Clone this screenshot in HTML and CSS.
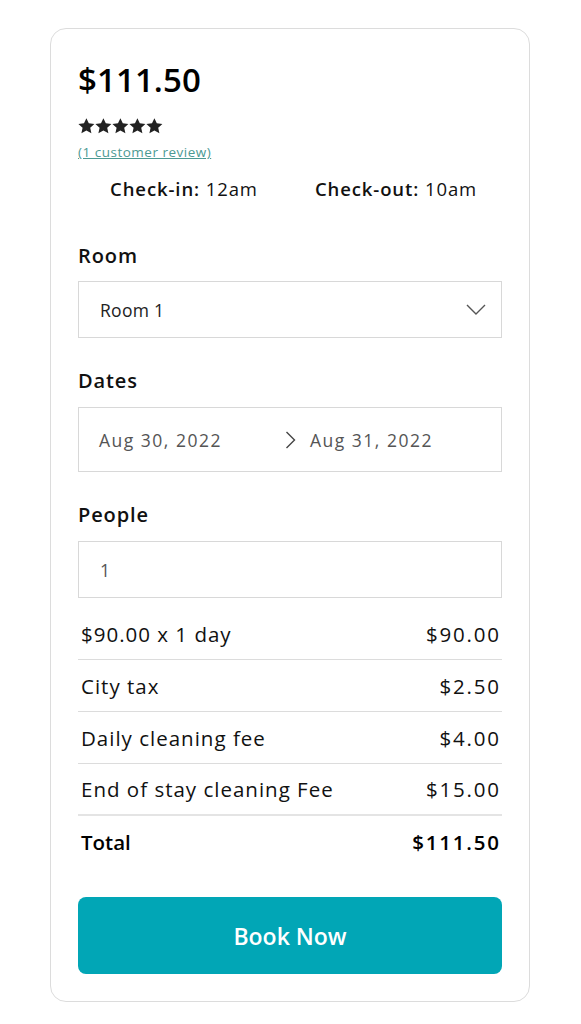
FILE: index.html
```html
<!DOCTYPE html>
<html>
<head>
<meta charset="utf-8">
<link rel="stylesheet" href="styles.css">
</head>
<body>
<div class="card">
  <div class="price">$111.50</div>
  <div class="stars">
    <svg viewBox="0 0 85 16" width="85" height="16">
      <g fill="#222">
        <path id="s" d="M8.4 0.2l2.4 5.1 5.6 0.6-4.2 3.8 1.2 5.6-5-2.9-5 2.9 1.2-5.6-4.2-3.8 5.6-0.6z"/>
        <use href="#s" x="17"/>
        <use href="#s" x="34"/>
        <use href="#s" x="51"/>
        <use href="#s" x="68"/>
      </g>
    </svg>
  </div>
  <a class="review" href="#">(1 customer review)</a>
  <div class="times">
    <div class="time"><b>Check-in:</b> 12am</div>
    <div class="time"><b>Check-out:</b> 10am</div>
  </div>

  <div class="label label-first">Room</div>
  <div class="field select">
    <span>Room 1</span>
    <svg class="chev-down" viewBox="0 0 20 11" width="20" height="11"><path d="M1 1l9 9 9-9" fill="none" stroke="#555" stroke-width="1.4"/></svg>
  </div>

  <div class="label">Dates</div>
  <div class="field dates">
    <span class="date">Aug 30, 2022</span>
    <svg class="chev-right" viewBox="0 0 11 18" width="11" height="18"><path d="M1.5 1l8 8-8 8" fill="none" stroke="#444" stroke-width="1.4"/></svg>
    <span class="date">Aug 31, 2022</span>
  </div>

  <div class="label">People</div>
  <div class="field people"><span>1</span></div>

  <div class="lines">
    <div class="line"><span>$90.00 x 1 day</span><span class="amt">$90.00</span></div>
    <div class="line"><span>City tax</span><span class="amt">$2.50</span></div>
    <div class="line"><span>Daily cleaning fee</span><span class="amt">$4.00</span></div>
    <div class="line line-last"><span>End of stay cleaning Fee</span><span class="amt">$15.00</span></div>
    <div class="line total"><span class="total-label">Total</span><span class="amt">$111.50</span></div>
  </div>

  <button class="book">Book Now</button>
</div>
</body>
</html>
```
FILE: styles.css
```css
* { box-sizing: border-box; }
html, body { margin: 0; padding: 0; background: #fff; }
body {
  font-family: "Open Sans", "Lato", sans-serif;
  color: #111;
}
.card {
  width: 480px;
  margin: 28px 0 0 50px;
  border: 1px solid #dcdcdc;
  border-radius: 16px;
  padding: 31px 27px 27px 27px;
  display: flex;
  flex-direction: column;
}
.price {
  font-size: 33px;
  line-height: 40px;
  font-weight: 600;
  color: #000;
  letter-spacing: 0.1px;
}
.stars {
  margin-top: 18px;
  height: 16px;
  line-height: 0;
}
.review {
  margin-top: 9px;
  font-size: 13.5px;
  line-height: 18px;
  color: #4c9a93;
  text-decoration: underline;
  letter-spacing: 0.5px;
  align-self: flex-start;
}
.times {
  margin-top: 16px;
  display: grid;
  grid-template-columns: 1fr 1fr;
  font-size: 18.5px;
  line-height: 24px;
  letter-spacing: 0.9px;
  color: #111;
}
.time { text-align: center; }
.time b { font-weight: 600; }
.label {
  margin-top: 31px;
  font-size: 20px;
  line-height: 24px;
  font-weight: 600;
  letter-spacing: 0.9px;
  color: #111;
}
.label-first { margin-top: 43px; }
.field {
  margin-top: 13px;
  border: 1px solid #d8d8d8;
  display: flex;
  align-items: center;
  font-size: 17.5px;
  color: #222;
}
.select {
  height: 57px;
  padding: 0 15px 0 21px;
  justify-content: space-between;
  letter-spacing: 0.3px;
}
.dates {
  margin-top: 14px;
  height: 65px;
  padding: 0 20px;
  color: #555;
  letter-spacing: 1.5px;
}
.date { width: 186px; }
.dates .date:last-child { width: auto; }
.chev-right { margin: 0 14px 0 0; }
.people {
  margin-top: 14px;
  height: 57px;
  padding: 0 21px;
  color: #555;
}
.lines {
  margin-top: 10px;
  display: flex;
  flex-direction: column;
}
.line {
  height: 52px;
  padding: 0 3px;
  border-bottom: 1px solid #dcdcdc;
  display: flex;
  align-items: center;
  justify-content: space-between;
  font-size: 20.5px;
  letter-spacing: 1px;
  color: #111;
}
.line .amt { letter-spacing: 1.8px; margin-right: -1.8px; }
.line-last { border-bottom: 2px solid #e4e4e4; }
.total {
  border-bottom: 0;
  font-weight: 600;
  color: #000;
}
.total .total-label { letter-spacing: 0; }
.book {
  margin-top: 29px;
  height: 77px;
  border: 0;
  border-radius: 8px;
  background: #01a6b6;
  color: #fff;
  font-family: inherit;
  font-size: 23px;
  font-weight: 600;
  cursor: pointer;
}
```
